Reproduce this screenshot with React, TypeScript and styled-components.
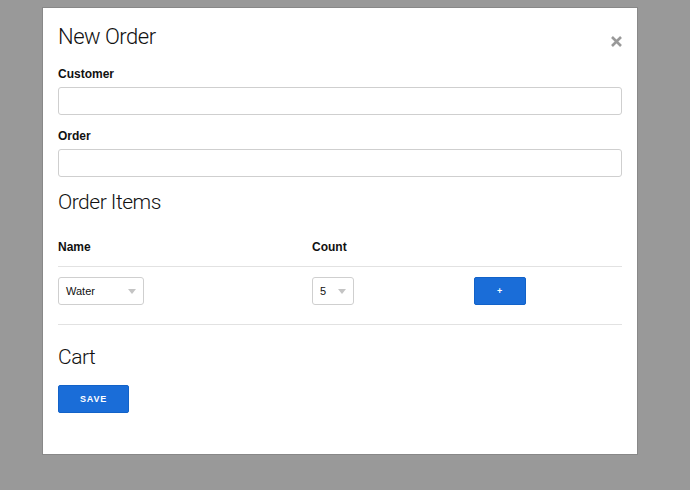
import React from "react";
import styled, { createGlobalStyle } from "styled-components";

const Global = createGlobalStyle`
  html, body { margin: 0; padding: 0; background: #999999; }
  body { font-family: "Liberation Sans", Arial, sans-serif; color: #111; }
  * { box-sizing: border-box; }
`;

const Page = styled.div`
  width: 690px;
  height: 490px;
  padding: 7px 0 0 42px;
`;

const Modal = styled.div`
  position: relative;
  width: 596px;
  height: 448px;
  background: #fff;
  border: 1px solid #888;
  padding: 16px 15px 0 15px;
`;

const Close = styled.button`
  position: absolute;
  top: 27px;
  right: 14px;
  border: none;
  background: none;
  padding: 0;
  width: 13px;
  height: 13px;
  cursor: pointer;
  display: flex;
`;

const Title = styled.h2<{ $mt?: number }>`
  margin: ${(p) => p.$mt ?? 0}px 0 0 0;
  font-family: Roboto, "Liberation Sans", sans-serif;
  font-weight: 300;
  font-size: ${(p) => (p.$mt === undefined ? 22 : 21)}px;
  line-height: 26px;
  color: #111;
  letter-spacing: -0.5px;
`;

const Label = styled.label<{ $mt: number }>`
  display: block;
  margin-top: ${(p) => p.$mt}px;
  font-weight: bold;
  font-size: 12px;
  line-height: 14px;
  color: #111;
`;

const Input = styled.input`
  display: block;
  width: 564px;
  height: 28px;
  margin-top: 6px;
  border: 1px solid #cfcfcf;
  border-radius: 3px;
  background: #fff;
  outline: none;
`;

const Table = styled.div`
  margin-top: 19px;
  width: 564px;
`;

const Row = styled.div<{ $head?: boolean }>`
  display: grid;
  grid-template-columns: 254px 162px 1fr;
  align-items: start;
  height: ${(p) => (p.$head ? 33 : 58)}px;
  padding-top: ${(p) => (p.$head ? 6 : 10)}px;
  border-bottom: 1px solid #e2e2e2;
`;

const Th = styled.div`
  font-weight: bold;
  font-size: 12px;
  line-height: 14px;
`;

const Select = styled.div<{ $w: number }>`
  position: relative;
  width: ${(p) => p.$w}px;
  height: 28px;
  border: 1px solid #cfcfcf;
  border-radius: 3px;
  display: flex;
  align-items: center;
  padding-left: 7px;
  font-size: 11px;
  color: #111;
`;

const Caret = styled.span`
  position: absolute;
  right: 7px;
  top: 11px;
  width: 0;
  height: 0;
  border-left: 4px solid transparent;
  border-right: 4px solid transparent;
  border-top: 5px solid #c4c4c4;
`;

const Button = styled.button<{ $w: number }>`
  width: ${(p) => p.$w}px;
  height: 28px;
  background: #1a6dd8;
  border: 1px solid #1262c8;
  border-radius: 2px;
  color: #fff;
  font-family: "Liberation Sans", Arial, sans-serif;
  font-weight: bold;
  font-size: 9px;
  letter-spacing: 0.8px;
  padding: 0;
  cursor: pointer;
`;

const SaveButton = styled(Button)`
  display: block;
  margin-top: 15px;
`;

export default function App() {
  return (
    <>
      <Global />
      <Page>
        <Modal>
          <Close aria-label="close">
            <svg width="13" height="13" viewBox="0 0 13 13">
              <path d="M2 2L11 11M11 2L2 11" stroke="#999" strokeWidth="2.6" strokeLinecap="butt" />
            </svg>
          </Close>
          <Title>New Order</Title>
          <Label $mt={17}>Customer</Label>
          <Input />
          <Label $mt={14}>Order</Label>
          <Input />
          <Title $mt={12}>Order Items</Title>
          <Table>
            <Row $head>
              <Th>Name</Th>
              <Th>Count</Th>
              <div />
            </Row>
            <Row>
              <Select $w={86}>
                Water
                <Caret />
              </Select>
              <Select $w={42}>
                5
                <Caret />
              </Select>
              <Button $w={52}>+</Button>
            </Row>
          </Table>
          <Title $mt={19}>Cart</Title>
          <SaveButton $w={71}>SAVE</SaveButton>
        </Modal>
      </Page>
    </>
  );
}
